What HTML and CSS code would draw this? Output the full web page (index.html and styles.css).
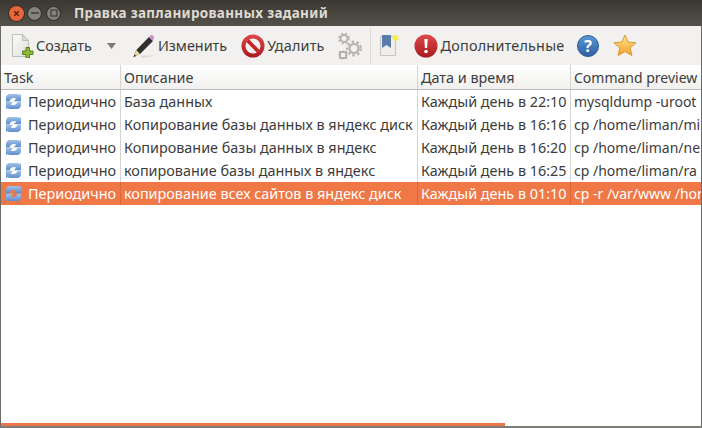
FILE: index.html
```html
<!DOCTYPE html>
<html lang="ru">
<head>
    <meta charset="UTF-8">
    <meta name="viewport" content="width=device-width, initial-scale=1.0">
    <title>Правка запланированных заданий</title>
    <link rel="stylesheet" href="styles.css">
</head>
<body>
    <svg class="defs" width="0" height="0">
        <defs>
            <linearGradient id="syncBlue" x1="0" y1="0" x2="0" y2="1">
                <stop offset="0" stop-color="#a3c2e8"/>
                <stop offset="1" stop-color="#5b8ccb"/>
            </linearGradient>
            <linearGradient id="redBall" x1="0" y1="0" x2="0" y2="1">
                <stop offset="0" stop-color="#e0474a"/>
                <stop offset="1" stop-color="#a81a20"/>
            </linearGradient>
            <linearGradient id="blueBall" x1="0" y1="0" x2="0" y2="1">
                <stop offset="0" stop-color="#5c9ad4"/>
                <stop offset="1" stop-color="#2c5f9e"/>
            </linearGradient>
            <linearGradient id="starFill" x1="0" y1="0" x2="0" y2="1">
                <stop offset="0" stop-color="#fde68a"/>
                <stop offset="1" stop-color="#f59f2c"/>
            </linearGradient>
            <linearGradient id="pageFill" x1="0" y1="0" x2="1" y2="1">
                <stop offset="0" stop-color="#fbfbfa"/>
                <stop offset="1" stop-color="#dfdfdb"/>
            </linearGradient>
            <symbol id="sync" viewBox="0 0 17 17">
                <path d="M1 8.500V5C1 2.500 2.800 1 5 1h7c1 0 1.800.3 2.500 1L16 .8V8.200H8.800l2.400-2.400C10.500 5.200 9.600 4.900 8.700 4.900 6.600 4.900 5 6.300 4.700 8.500z" fill="url(#syncBlue)"/>
                <path d="M16 8.800V12c0 2.500-1.800 4-4 4H5c-1 0-1.800-.3-2.500-1L1 16.200V8.800h7.200L5.800 11.200c.7.600 1.600.9 2.500.9 2.100 0 3.700-1.300 4-3.300z" fill="url(#syncBlue)"/>
            </symbol>
        </defs>
    </svg>

    <div class="window">
        <div class="titlebar">
            <div class="win-buttons">
                <span class="win-btn win-close">
                    <svg width="7" height="7" viewBox="0 0 8 8"><path d="M1.500 1.500l5 5M6.500 1.500l-5 5" stroke="#4a2012" stroke-width="1.500"/></svg>
                </span>
                <span class="win-btn">
                    <svg width="8" height="8" viewBox="0 0 8 8"><path d="M0 4h8" stroke="#3c3b37" stroke-width="1.500"/></svg>
                </span>
                <span class="win-btn">
                    <svg width="8" height="8" viewBox="0 0 8 8"><rect x="1" y="1" width="6" height="6" fill="none" stroke="#3c3b37" stroke-width="1.200"/></svg>
                </span>
            </div>
            <span class="win-title">Правка запланированных заданий</span>
        </div>

        <div class="toolbar">
            <button class="tool tool-create">
                <svg width="23" height="24" viewBox="0 0 23 24">
                    <path d="M1.500.5h10l6 6v16h-16z" fill="url(#pageFill)" stroke="#bdbdb9"/>
                    <path d="M11.500.5v6h6z" fill="#d8d8d4" stroke="#bdbdb9"/>
                    <path d="M15 13.500h3.500V17H22v3.500h-3.500V24H15v-3.500h-3.500V17H15z" fill="#8cbb38" stroke="#55801a"/>
                </svg>
                <span>Создать</span>
            </button>
            <svg class="tool-arrow" width="9" height="6" viewBox="0 0 9 6"><path d="M0 0h9L4.500 6z" fill="#7d7b76"/></svg>
            <button class="tool tool-edit">
                <svg width="22" height="24" viewBox="0 0 22 24">
                    <path d="M8 21.500h13l-6 2H8z" fill="#dcdbd7"/>
                    <path d="M.5 23l2.800-7L16 3l4 4L7 20z" fill="#2f2f2f"/>
                    <path d="M.5 23l2.800-7 3.700 4z" fill="#ecdca0"/>
                    <path d="M.5 23l1-2.700 1.700 1.700z" fill="#333"/>
                    <path d="M16 3l1.600-1.600c.6-.6 1.500-.6 2.100 0l1 1c.6.6.6 1.500 0 2.100L20 7z" fill="#cf8fc4"/>
                </svg>
                <span>Изменить</span>
            </button>
            <button class="tool tool-delete">
                <svg width="24" height="24" viewBox="0 0 24 24">
                    <circle cx="12" cy="12" r="11.500" fill="url(#redBall)"/>
                    <circle cx="12" cy="12" r="7.500" fill="#f2f0ee"/>
                    <path d="M5.500 8l2.500-2.800 10.500 10.800-2.500 2.800z" fill="#c4252a"/>
                </svg>
                <span>Удалить</span>
            </button>
            <button class="tool tool-gears" aria-label="Настройки">
                <svg width="24" height="28" viewBox="0 0 24 28" fill="none" stroke="#b3b2ae">
                    <circle cx="6" cy="6.500" r="3.500" stroke-width="1.800"/>
                    <circle cx="6" cy="6.500" r="5" stroke-width="1.800" stroke-dasharray="2 2"/>
                    <circle cx="16" cy="16.500" r="4.500" stroke-width="2.200"/>
                    <circle cx="16" cy="16.500" r="6.800" stroke-width="2.200" stroke-dasharray="2.500 2.400"/>
                    <rect x="2" y="20" width="6" height="6" stroke-width="2"/>
                    <circle cx="5" cy="23" r="4" stroke-width="1.200" stroke-dasharray="1.500 1.500"/>
                </svg>
            </button>
            <span class="tool-sep"></span>
            <button class="tool tool-book" aria-label="Закладки">
                <svg width="20" height="24" viewBox="0 0 20 24">
                    <path d="M1.500 2.500h15v19h-15z" fill="#efeeea" stroke="#c6c5c0"/>
                    <path d="M3 1h9v13l-4.500-3L3 14z" fill="#5b7cab"/>
                    <circle cx="16.500" cy="4" r="3" fill="#f4ee50"/>
                </svg>
            </button>
            <button class="tool tool-more">
                <svg width="24" height="24" viewBox="0 0 24 24">
                    <circle cx="12" cy="12" r="11.500" fill="url(#redBall)"/>
                    <path d="M10.300 5h3.400l-.6 9h-2.200z" fill="#fff"/>
                    <circle cx="12" cy="17.500" r="1.800" fill="#fff"/>
                </svg>
                <span>Дополнительные</span>
            </button>
            <button class="tool tool-help" aria-label="Справка">
                <svg width="22" height="22" viewBox="0 0 22 22">
                    <circle cx="11" cy="11" r="10.500" fill="url(#blueBall)" stroke="#2b5a94"/>
                    <text x="11" y="17" text-anchor="middle" class="help-mark">?</text>
                </svg>
            </button>
            <button class="tool tool-star" aria-label="Избранное">
                <svg width="24" height="23" viewBox="0 0 24 23">
                    <path d="M12 1l3.200 7 7.800.8-5.800 5.200 1.700 7.500L12 17.600l-6.900 3.900L6.800 14 1 8.800 8.800 8z" fill="url(#starFill)" stroke="#d79a34"/>
                </svg>
            </button>
        </div>

        <div class="list">
            <table class="tasks">
                <colgroup>
                    <col class="col-task">
                    <col class="col-desc">
                    <col class="col-date">
                    <col class="col-cmd">
                </colgroup>
                <thead>
                    <tr>
                        <th>Task</th>
                        <th>Описание</th>
                        <th>Дата и время</th>
                        <th>Command preview</th>
                    </tr>
                </thead>
                <tbody>
                    <tr>
                        <td><div class="task-cell"><svg width="17" height="17"><use href="#sync"/></svg>Периодично</div></td>
                        <td>База данных</td>
                        <td>Каждый день в 22:10</td>
                        <td>mysqldump -uroot</td>
                    </tr>
                    <tr>
                        <td><div class="task-cell"><svg width="17" height="17"><use href="#sync"/></svg>Периодично</div></td>
                        <td>Копирование базы данных в яндекс диск</td>
                        <td>Каждый день в 16:16</td>
                        <td>cp /home/liman/mi</td>
                    </tr>
                    <tr>
                        <td><div class="task-cell"><svg width="17" height="17"><use href="#sync"/></svg>Периодично</div></td>
                        <td>Копирование базы данных в яндекс</td>
                        <td>Каждый день в 16:20</td>
                        <td>cp /home/liman/ne</td>
                    </tr>
                    <tr>
                        <td><div class="task-cell"><svg width="17" height="17"><use href="#sync"/></svg>Периодично</div></td>
                        <td>копирование базы данных в яндекс</td>
                        <td>Каждый день в 16:25</td>
                        <td>cp /home/liman/ra</td>
                    </tr>
                    <tr class="selected">
                        <td><div class="task-cell"><svg width="17" height="17"><use href="#sync"/></svg>Периодично</div></td>
                        <td>копирование всех сайтов в яндекс диск</td>
                        <td>Каждый день в 01:10</td>
                        <td>cp -r /var/www /hor</td>
                    </tr>
                </tbody>
            </table>
            <div class="scroll-indicator"></div>
        </div>
        <div class="window-shadow"></div>
    </div>
</body>
</html>
```

FILE: styles.css
```css
* {
    box-sizing: border-box;
}
html, body {
    margin: 0;
    height: 100%;
    overflow: hidden;
}
body {
    font-family: "Noto Sans", "Open Sans", sans-serif;
    font-size: 14.4px;
    color: #3c3c3c;
    background: #fff;
}
.defs {
    display: block;
    height: 0;
}
.window {
    display: flex;
    flex-direction: column;
    height: 428px;
    width: 702px;
}
.titlebar {
    display: flex;
    align-items: center;
    height: 26px;
    padding-left: 9px;
    background: linear-gradient(#3b3833, #54514a);
    flex: none;
}
.win-buttons {
    display: flex;
    align-items: center;
    width: 65px;
}
.win-btn {
    display: flex;
    align-items: center;
    justify-content: center;
    width: 13px;
    height: 13px;
    margin-left: 6px;
    border-radius: 50%;
    background: #85837c;
    box-shadow: 0 0 0 1px #33312d;
}
.win-close {
    width: 15px;
    height: 15px;
    margin-left: 0;
    margin-right: -2px;
    background: #e9653a;
}
.win-title {
    font-size: 13.500px;
    font-weight: 700;
    color: #dfdbd2;
    letter-spacing: 0.3px;
}
.toolbar {
    display: flex;
    align-items: center;
    height: 39px;
    padding-left: 10px;
    background: #f2f1ef;
    border-left: 1px solid #6b6a66;
    border-right: 1px solid #6b6a66;
    flex: none;
}
.tool {
    display: flex;
    align-items: center;
    flex: none;
    padding: 0;
    border: none;
    background: none;
    font: inherit;
    color: #3c3c3c;
}
.tool span {
    margin-left: 2px;
}
.tool-arrow {
    flex: none;
    margin-left: 15px;
}
.tool-edit {
    margin-left: 17px;
}
.tool-edit span {
    margin-left: 3px;
}
.tool-delete {
    margin-left: 14px;
}
.tool-delete span {
    letter-spacing: 0.2px;
}
.tool-gears {
    margin-left: 13px;
}
.tool-sep {
    flex: none;
    width: 1px;
    height: 36px;
    margin-left: 8px;
    background: #dcdbd8;
}
.tool-book {
    margin-left: 8px;
}
.tool-more {
    margin-left: 15px;
}
.tool-more span {
    margin-left: 3px;
    letter-spacing: 0.2px;
}
.tool-help {
    margin-left: 13px;
}
.tool-star {
    margin-left: 14px;
}
.help-mark {
    font-size: 16px;
    font-weight: 700;
    fill: #fff;
}
.list {
    position: relative;
    flex: 1;
    overflow: hidden;
    border-left: 1px solid #6b6a66;
    border-right: 1px solid #6b6a66;
    background: #fff;
}
.tasks {
    border-collapse: separate;
    border-spacing: 0;
    table-layout: fixed;
    width: 700px;
}
.col-task {
    width: 120px;
}
.col-desc {
    width: 297px;
}
.col-date {
    width: 153px;
}
.tasks th {
    height: 25px;
    padding: 0 3px;
    font-weight: 400;
    text-align: left;
    white-space: nowrap;
    background: linear-gradient(#ffffff, #f1f0ee);
    border-right: 1px solid #d6d5d2;
    border-bottom: 1px solid #bdbcb8;
}
.tasks td {
    height: 23px;
    padding: 0 3px;
    white-space: nowrap;
    overflow: hidden;
    border-right: 1px solid #d6d5d2;
}
.tasks th:last-child, .tasks td:last-child {
    padding-right: 0;
    border-right: none;
    font-size: 14px;
}
.task-cell {
    display: flex;
    align-items: center;
    gap: 6px;
    margin-left: 1px;
}
.selected td {
    background: #f07746;
    color: #fff;
    border-right-color: #d9683c;
}
.scroll-indicator {
    position: absolute;
    left: 0;
    bottom: 0;
    width: 504px;
    height: 3px;
    background: #ea7547;
}
.window-shadow {
    height: 2px;
    background: #7c7b78;
    flex: none;
}
```
